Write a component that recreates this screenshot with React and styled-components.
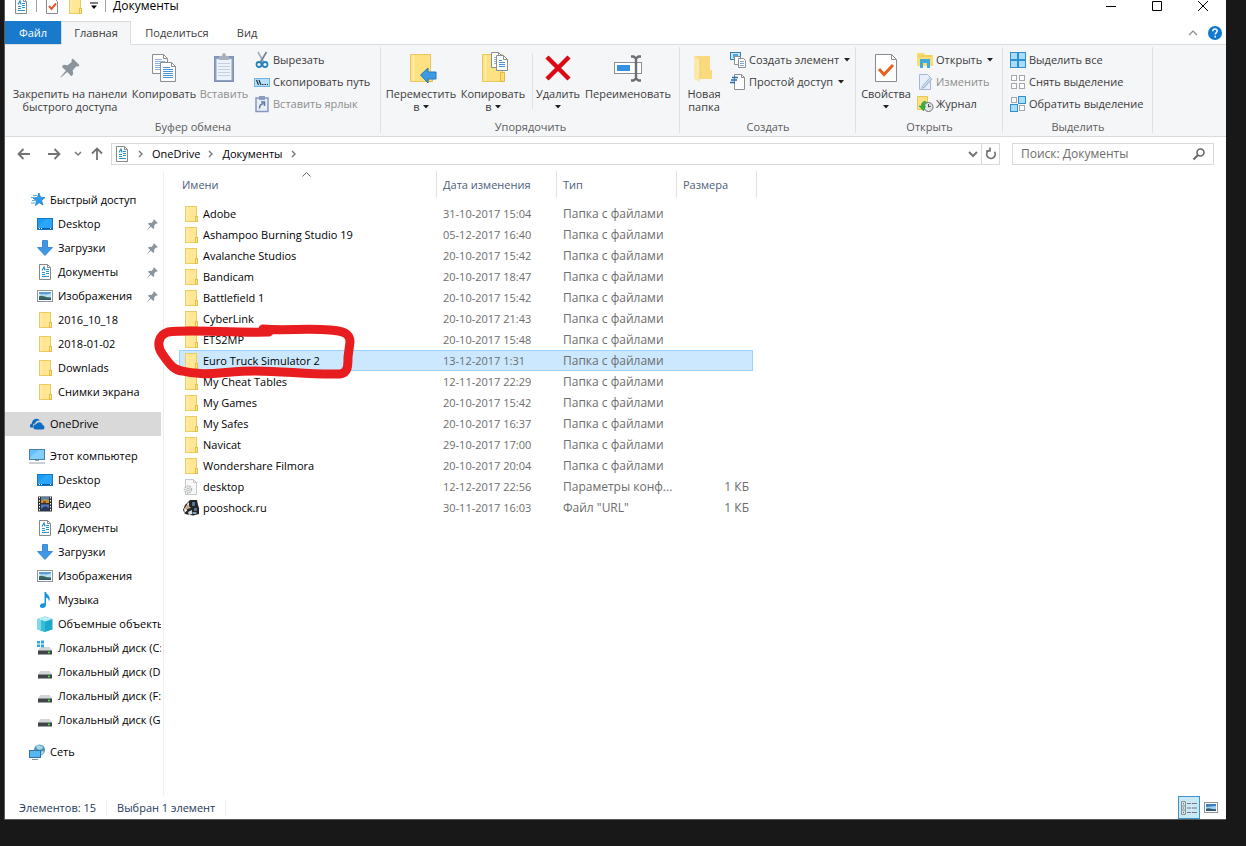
import React from "react";
import styled, { createGlobalStyle, css } from "styled-components";

const GlobalStyle = createGlobalStyle`
  *, *::before, *::after { box-sizing: border-box; }
  html, body { margin: 0; padding: 0; }
  body { background: #181818; font: 11px/16px "Open Sans", "Noto Sans", sans-serif; color: #000; }
  button, input { font: inherit; color: inherit; border: 0; background: none; padding: 0; margin: 0; }
  a { color: inherit; text-decoration: none; }
  svg { display: block; flex: none; overflow: visible; }
`;

/* ---------- window frame ---------- */
const Desktop = styled.div`
  min-height: 100vh;
  padding: 0 20px 26px 4px;
  display: flex;
  overflow: hidden;
`;
const Window = styled.main`
  flex: 1;
  min-width: 0;
  display: flex;
  flex-direction: column;
  background: #fff;
  border: solid #5a5a5a;
  border-width: 0 0 1px 1px;
`;
const TitleBar = styled.header`
  display: flex;
  align-items: center;
  justify-content: space-between;
  box-sizing: content-box;
  height: 12px;
  padding-bottom: 9px;
`;
const QuickAccess = styled.div`
  display: flex;
  align-items: center;
  gap: 7px;
  padding-left: 8px;
`;
const Divider = styled.span`
  width: 1px;
  height: ${(p) => p.$h}px;
  background: ${(p) => p.$color || "#a0a0a0"};
`;
const Title = styled.h1`
  margin: 0;
  font-size: 12px;
  line-height: 12px;
  font-weight: 400;
`;
const IconButton = styled.button`
  display: flex;
  align-items: center;
  justify-content: center;
  width: ${(p) => p.$w || 16}px;
`;
const Controls = styled.div`
  display: flex;
`;

/* ---------- tabs ---------- */
const TabStrip = styled.div`
  display: flex;
  height: 23px;
`;
const Tab = styled.button`
  width: ${(p) => p.$w}px;
  height: 24px;
  color: #3b3b3b;
  border: 1px solid transparent;
  ${(p) => p.$kind === "file" && css`background: #1979ca; color: #fff; height: 23px;`}
  ${(p) => p.$kind === "active" && css`background: #f5f6f7; border-color: #dadbdc; border-bottom-color: #f5f6f7; position: relative;`}
`;
const TabTools = styled.div`
  display: flex;
  align-items: center;
  gap: 6px;
  margin-left: auto;
  padding-right: 3px;
`;

/* ---------- ribbon ---------- */
const Ribbon = styled.div`
  display: flex;
  background: #f5f6f7;
  border: solid #dadbdc;
  border-width: 1px 0;
`;
const Group = styled.section`
  width: ${(p) => p.$w}px;
  position: relative;
  &::after {
    content: "";
    position: absolute;
    right: 0;
    top: 2px;
    bottom: 3px;
    width: 1px;
    background: #dfe1e3;
  }
`;
const GroupBody = styled.div`
  display: flex;
  height: 73px;
  padding-left: ${(p) => p.$pad}px;
`;
const GroupTitle = styled.h2`
  margin: 0;
  font-size: 11px;
  font-weight: 400;
  line-height: 18px;
  text-align: center;
  color: #5c5c5c;
`;
const BigButton = styled.button`
  width: ${(p) => p.$w}px;
  padding-top: 7px;
  display: flex;
  flex-direction: column;
  align-items: center;
  gap: 3px;
  white-space: nowrap;
  color: ${(p) => (p.disabled ? "#8d8d8d" : "#3b3b3b")};
`;
const BigLabel = styled.span`
  display: block;
  line-height: 13px;
  text-align: center;
`;
const ArrowLine = styled.span`
  display: flex;
  align-items: center;
  justify-content: center;
  gap: 3px;
  height: 13px;
`;
const SmallColumn = styled.div`
  display: flex;
  flex-direction: column;
  padding: 4px 0 0 ${(p) => p.$pad}px;
`;
const SmallButton = styled.button`
  display: flex;
  align-items: center;
  gap: 3px;
  height: 22px;
  white-space: nowrap;
  color: ${(p) => (p.disabled ? "#8d8d8d" : "#3b3b3b")};
  & > svg:last-child:not(:first-child) { margin-left: 2px; }
`;
const InnerDivider = styled.span`
  width: 1px;
  height: 56px;
  margin: 8px 0 0 3px;
  background: #dfe1e3;
`;

/* ---------- address row ---------- */
const AddressRow = styled.div`
  display: flex;
  align-items: center;
  height: 34px;
  padding: 0 12px 0 9px;
`;
const AddressBox = styled.nav`
  flex: 1;
  display: flex;
  align-items: center;
  gap: 8px;
  height: 22px;
  margin: 0 12px 0 0;
  padding-left: 2px;
  border: 1px solid #d9d9d9;
`;
const AddressEnd = styled.div`
  display: flex;
  align-items: center;
  margin-left: auto;
  height: 20px;
  & > button:last-child { height: 20px; border-left: 1px solid #d9d9d9; }
`;
const SearchBox = styled.label`
  display: flex;
  align-items: center;
  width: 202px;
  height: 22px;
  padding: 0 8px;
  border: 1px solid #d9d9d9;
`;
const SearchInput = styled.input`
  flex: 1;
  min-width: 0;
  outline: 0;
  font-size: 12px;
  &::placeholder { color: #6d6d6d; opacity: 1; }
`;

/* ---------- navigation tree ---------- */
const Body = styled.div`
  flex: 1;
  display: flex;
  min-height: 0;
`;
const Tree = styled.nav`
  width: 159px;
  flex: none;
  display: flex;
  flex-direction: column;
  gap: 8px;
  padding: 17px 2px 32px 0;
  border-right: 1px solid #f0f0f0;
`;
const TreeList = styled.ul`
  list-style: none;
  margin: 0;
  padding: 0;
`;
const TreeLink = styled.a`
  display: flex;
  align-items: center;
  gap: 5px;
  height: 24px;
  padding-left: ${(p) => (p.$root ? 24 : 32)}px;
  overflow: hidden;
  white-space: nowrap;
  background: ${(p) => (p.$active ? "#d9d9d9" : "transparent")};
`;
const PinSlot = styled.span`
  margin-left: auto;
  padding-right: 3px;
`;

/* ---------- file list ---------- */
const Files = styled.section`
  flex: 1;
  min-width: 0;
  position: relative;
  padding-left: 15px;
`;
const Table = styled.table`
  table-layout: fixed;
  width: 578px;
  border-spacing: 0;
`;
const Th = styled.th`
  position: relative;
  height: 27px;
  padding: 0 0 0 ${(p) => (p.$first ? 3 : 6)}px;
  border-right: 1px solid #e2e2e2;
  text-align: left;
  font-weight: 400;
  color: #4c607a;
`;
const SortMark = styled.span`
  position: absolute;
  top: 1px;
  left: 123px;
`;
const Spacer = styled.tr`
  height: 5px;
`;
const Row = styled.tr`
  & > td {
    height: 21px;
    padding: 0 4px 0 6px;
    line-height: 16px;
    color: #6d6d6d;
    white-space: nowrap;
    overflow: hidden;
    text-overflow: ellipsis;
  }
  & > td:first-child { color: #000; padding-left: 4px; }
  & > td:nth-child(n + 3) { font-size: 12px; }
  & > td:nth-child(4) { text-align: right; }
  ${(p) => p.$selected && css`
    & > td:nth-child(-n + 4) {
      background: #cce8ff;
      box-shadow: inset 0 1px #99d1ff, inset 0 -1px #99d1ff;
    }
    & > td:nth-child(1) { box-shadow: inset 0 1px #99d1ff, inset 0 -1px #99d1ff, inset 1px 0 #99d1ff; }
    & > td:nth-child(4) { box-shadow: inset 0 1px #99d1ff, inset 0 -1px #99d1ff, inset -1px 0 #99d1ff; }
  `}
`;
const Name = styled.span`
  display: flex;
  align-items: center;
  gap: 4px;
`;
const Marker = styled.svg`
  position: absolute;
  left: -12px;
  top: 150px;
  pointer-events: none;
`;

/* ---------- status bar ---------- */
const StatusBar = styled.footer`
  display: flex;
  align-items: center;
  gap: 10px;
  height: 23px;
  padding-left: 14px;
  color: #1e395b;
`;
const Views = styled.div`
  display: flex;
  margin-left: auto;
  padding-right: 4px;
`;
const ViewButton = styled.button`
  display: flex;
  align-items: center;
  justify-content: center;
  width: 22px;
  height: 23px;
  border: 1px solid ${(p) => (p.$on ? "#3a97c4" : "transparent")};
  background: ${(p) => (p.$on ? "#cbe8f6" : "none")};
`;

/* ---------- icons ---------- */
const Svg = ({ s = 16, h, children, ...rest }) => (
  <svg width={s} height={h || s} viewBox={`0 0 ${s} ${h || s}`} fill="none" aria-hidden="true" {...rest}>{children}</svg>
);
const Caret = () => <Svg s={6} h={4}><path d="M0 0h6L3 3.5z" fill="#222" /></Svg>;
const FolderIcon = () => (
  <Svg>
    <rect x="2.5" y="0.5" width="11" height="15" fill="#ffe794" stroke="#edcb62" />
    <path d="M4 1v14" stroke="#fff0b5" />
    <rect x="12.500" y="10.500" width="2" height="5" fill="#ffe596" stroke="#e6bd47" />
  </Svg>
);
const DocIcon = () => (
  <Svg>
    <path d="M2.500.5h8l3 3v12h-11z" fill="#fff" stroke="#858a8f" />
    <path d="M10.500.5v3h3" stroke="#858a8f" />
    <path d="M5 6.500 7 3l1 3.500M9 5.500h3M5 8.500h3M9 7.500h3M9 9.500h3M5 10.500h3M5 12.500h7" stroke="#2b93cf" strokeWidth="1.200" />
  </Svg>
);
const CheckDoc = () => (
  <Svg>
    <path d="M2.500.5h8l3 3v12h-11z" fill="#fff" stroke="#8a8a8a" />
    <path d="m5 8 2.500 3L12 5.500" stroke="#e2592b" strokeWidth="2" />
  </Svg>
);
const DesktopIcon = () => (
  <Svg>
    <rect x=".5" y="2.500" width="15" height="11" fill="#1a9bf5" stroke="#1479c4" />
    <path d="m1 10 8-7h6v10H1z" fill="#39b0ff" opacity=".5" />
    <path d="M1 12.500h14" stroke="#0f5fa5" /><path d="M2 12.500h1m1 0h1m8 0h1" stroke="#fff" />
  </Svg>
);
const DownIcon = () => <Svg><path d="M5.500.5h5v7h5L8 15.500.5 7.500h5z" fill="#3f97e4" stroke="#2d7ccb" strokeWidth=".8" /></Svg>;
const PictureIcon = () => (
  <Svg>
    <rect x=".5" y="2.500" width="15" height="11" fill="#fff" stroke="#8f9499" />
    <rect x="2" y="4" width="12" height="8" fill="#b9def5" />
    <path d="M2 4h12v1.500L9 6.500 2 6z" fill="#5a9bd3" />
    <path d="M2 8.500c3-2 5 1 12 1v2.500H2z" fill="#38665c" /><path d="M6 11h8v1H2z" fill="#274b7b" />
  </Svg>
);
const StarIcon = () => (
  <Svg>
    <path d="m10 1 1.600 4.300 4.400.2-3.400 2.900L14 13l-3.800-2.300L6.500 13.500l.9-4.600L4 6l4.400-.6z" fill="#2f9be8" stroke="#1779c6" strokeWidth=".7" />
    <path d="M4 3.500h4M2 5.500h3M3 8.500h3M2 11h4" stroke="#4aaef0" />
  </Svg>
);
const PinIcon = ({ size = 11 }) => (
  <svg width={size} height={size} viewBox="0 0 22 22" aria-hidden="true">
    <path d="M14 .5 21.500 8l-2 1.500-1.500-.5-4 4.500.5 4.500-2 2-4.500-4.500L1 21.500.5 21 6.500 14 2 9.500l2-2 4.500.5L13 4l-.5-1.500z" fill="#8b949b" />
  </svg>
);
const CloudIcon = () => (
  <Svg>
    <path d="M1.200 11.500A3 3 0 0 1 3 7.200 4.500 4.500 0 0 1 11 4.500C8 4 6.500 6 6.300 7.300 4.500 7.500 3.700 9 4.200 11.500z" fill="#0d6cbd" />
    <path d="M6.800 13.500a2.600 2.600 0 0 1 .2-5.200 3.600 3.600 0 0 1 6.700.8A2.300 2.300 0 0 1 14 13.500z" fill="#0d6cbd" />
  </Svg>
);
const ComputerIcon = () => (
  <Svg>
    <rect x=".5" y="1.500" width="15" height="10" fill="#64c0fa" stroke="#4a7fa6" />
    <path d="M1 9 10 2h5v9H1z" fill="#9bdaff" opacity=".55" />
    <path d="M6 12.500h4M0 15h16" stroke="#8ca2b3" />
  </Svg>
);
const VideoIcon = () => (
  <Svg>
    <path d="M1 .5h14v15H1z" fill="#303030" />
    <path d="M2.500 1v14M13.500 1v14" stroke="#fff" strokeDasharray="1.500 1.500" />
    <path d="M4 1h8v6H4z" fill="#5c7fb8" /><path d="M4 4.500 8 3l4 1v3H4z" fill="#b6992f" /><path d="M6 5h3v2H6z" fill="#b8402a" />
    <path d="M4 8.500h8V15H4z" fill="#4e79c4" /><path d="M4 13 8 10l4 2v3H4z" fill="#26365c" />
  </Svg>
);
const MusicIcon = () => (
  <Svg>
    <path d="M7.500 0h1.500c.5 3 5.500 4 3 9.500 0-2.500-1.500-3.500-3-4v7.500c0 1.700-1.500 3-3.500 3S2.500 15 3 13.300c.5-1.800 2.600-2.500 4.500-2z" fill="#1a93df" />
  </Svg>
);
const CubeIcon = () => (
  <Svg>
    <path d="M8 .5 15.500 3v10.500L8 16 .5 13.500V3z" fill="#1fa9c9" />
    <path d="M.5 3 8 5.500V16L.5 13.500z" fill="#7cdcec" /><path d="M8 .5 15.500 3 8 5.500.5 3z" fill="#b6f0f6" /><path d="m4 4 4 1.500V16l-4-1.500z" fill="#37bdd6" />
  </Svg>
);
const DiskIcon = ({ win }) => (
  <Svg>
    <path d="M3.500 7h9L15 10.500H1z" fill="#d3d5d6" /><path d="M1 10.500h14v4H1z" fill="#3e4347" />
    <path d="M1 10.500h14" stroke="#8b9094" /><path d="M11 12.500h2" stroke="#4fe05a" strokeWidth="1.500" />
    {win && <><path d="M0 0h7v7.500H0z" fill="#fff" /><path d="M0 1h3v2.500H0zM4 .5h3v3H4zM0 4.500h3V7H0zM4 4.500h3v3H4z" fill="#2aa8e0" /></>}
  </Svg>
);
const NetworkIcon = () => (
  <Svg>
    <circle cx="10.500" cy="6" r="5.500" fill="#4f94bd" /><path d="M7 2c3-2 7 0 7 2l-3 2-3-1zM10 8l4-1 1 1-2 3z" fill="#a8d5e5" />
    <rect x=".5" y="6.500" width="11" height="7" fill="#57b6f4" stroke="#31729e" /><path d="M3 15.500h6" stroke="#7a95a8" />
  </Svg>
);
const IniIcon = () => (
  <Svg>
    <path d="M2.500.5h8l3 3v12h-11z" fill="#f8f8f8" stroke="#c5c8ca" /><path d="M10.500.5v3h3" stroke="#c5c8ca" />
    <circle cx="5" cy="10.500" r="3.500" fill="#eee" stroke="#b2b6b9" strokeWidth="1.500" strokeDasharray="1.500 1" /><circle cx="5" cy="10.500" r="1.300" fill="#fff" stroke="#b2b6b9" />
  </Svg>
);
const UrlIcon = () => (
  <Svg>
    <path d="M7 0h7l1 5 1 3v6l-6 1.500-8-1.500-2-4 2-5z" fill="#202428" />
    <path d="M1 9 5 3l1 3 2 2-4 1-2 3z" fill="#c9b08b" /><path d="M1.500 8.500l3 1.500-3 3z" fill="#fff" /><path d="M4 4l2-2v4z" fill="#eee3cf" />
    <path d="M9 2h3v4H9zM11 8h3v3h-3z" fill="#56708f" /><path d="m5 12 4-2v4l-3 1z" fill="#d6dade" /><path d="M9.500 12h4v2h-4z" fill="#8aa0b8" />
  </Svg>
);
const Page = ({ x, y, w, h, gray }) => (
  <g transform={`translate(${x} ${y})`}>
    <path d={`M.5.5h${w - 5}l4 4v${h - 5}h-${w - 1}z`} fill="#fff" stroke="#8a8f94" />
    <path d={`M${w - 4.5}.5v4h4`} stroke="#8a8f94" />
    {Array.from({ length: Math.floor((h - 7) / 2) }, (_, i) => (
      <path key={i} d={`M3 ${5.5 + i * 2}h${i ? w - 6 : w - 9}`} stroke={gray ? "#8eb3da" : "#4a90d9"} />
    ))}
  </g>
);
const CopyIcon = () => <Svg s={32}><Page x={4} y={2} w={16} h={20} gray /><Page x={12} y={10} w={16} h={20} /></Svg>;
const BigPin = () => <Svg s={32}><g transform="translate(6 6)"><PinIcon size={20} /></g></Svg>;
const PasteIcon = () => (
  <Svg s={32}>
    <rect x="6.500" y="4.500" width="19" height="25" fill="#8d9fc2" stroke="#7d8fb3" /><path d="M8.500 7h15v21h-15z" fill="#eef2f9" />
    <path d="M10 11.500h12M10 14.500h12M10 17.500h12M10 20.500h12M10 23.500h12" stroke="#c5cfe2" />
    <path d="M11 4h3c0-4 4-4 4 0h3v4H11z" fill="#a9b1c0" />
  </Svg>
);
const CutIcon = () => (
  <Svg>
    <path d="M4 0l5.500 10" stroke="#a4afb9" strokeWidth="1.600" /><path d="M12.500 0 6.500 10" stroke="#71808e" strokeWidth="1.600" />
    <circle cx="5" cy="12.500" r="2.500" stroke="#2683c2" strokeWidth="1.800" /><circle cx="11" cy="12.500" r="2.500" stroke="#2683c2" strokeWidth="1.800" />
  </Svg>
);
const PathIcon = () => (
  <Svg><rect x=".5" y="4.500" width="15" height="8" fill="#b8e0fa" stroke="#6fb2df" /><path d="m2.500 6 2 5M5 6l2 5M8 10.500h1.500m1 0H12m1 0h1" stroke="#234" strokeWidth="1.200" /></Svg>
);
const PasteLinkIcon = () => (
  <Svg>
    <rect x="2" y="2" width="12" height="13.500" fill="#e9eef7" stroke="#8498bf" strokeWidth="1.500" /><path d="M5 0h6v4H5z" fill="#8b9cbd" />
    <path d="M5.500 12.500c0-3 1-4.500 4-5M7 6h3.500v4" stroke="#5e78ab" strokeWidth="1.500" />
  </Svg>
);
const BigFolder = ({ children }) => (
  <Svg s={32}>
    <rect x="5.500" y="2.500" width="20" height="27" fill="#fde283" stroke="#e9c659" /><path d="M8.500 3v26" stroke="#fff0b0" strokeWidth="1.500" /><path d="M23.500 20.500h4v9h-4z" fill="#fbdc78" stroke="#e3b840" />
    {children}
  </Svg>
);
const MoveIcon = () => <BigFolder><path d="M15.500 23 23 16v4h8v7h-8v4z" fill="#3d9be5" stroke="#2778bd" /></BigFolder>;
const CopyToIcon = () => <BigFolder><Page x={14} y={0} w={12} h={16} gray /><Page x={19} y={3} w={12} h={16} /></BigFolder>;
const DeleteIcon = () => <Svg s={32}><path d="m5 5 22 22M27 5 5 27" stroke="#dc0a14" strokeWidth="4.500" /></Svg>;
const RenameIcon = () => (
  <Svg s={32}>
    <rect x="2.500" y="10.500" width="27" height="11" fill="#fff" stroke="#8a8f94" /><path d="M5 13h13v6H5z" fill="#3390e0" />
    <path d="M19 4.500h2.500l2.500 2 2.500-2H29M24 6v20M19 28.500h2.500l2.500-2 2.500 2H29" stroke="#6b6f73" strokeWidth="2.400" />
  </Svg>
);
const NewFolderIcon = () => (
  <Svg s={32}><path d="M6 4h16v14h2v9H11z" fill="#f9da7e" /><path d="M6 4l6 4v22l-6-3z" fill="#fbe9aa" /><path d="M12 8v19" stroke="#f0cd66" /></Svg>
);
const NewItemIcon = () => (
  <Svg>
    <rect x=".5" y=".5" width="10" height="7" fill="#cbe7fa" stroke="#2f80bd" /><path d="M3 2h5v4H3z" fill="#4fa7e0" />
    <path d="M4.500 4.500h6v8h-6z" fill="#fff" stroke="#8a8f94" /><path d="M8.500 6.500h5l2 2v7h-7z" fill="#fff" stroke="#8a8f94" />
    <path d="M10 9.500h4M10 11.500h4M10 13.500h4" stroke="#7da7cf" />
  </Svg>
);
const EasyIcon = () => (
  <Svg><path d="M4.500.5h7l3 3v12h-10z" fill="#fff" stroke="#8a8f94" /><path d="M11.500.5v3h3" stroke="#8a8f94" /><path d="M2 3.500h6M1 6h6M0 8.500h5" stroke="#1f6fb2" strokeWidth="1.400" /></Svg>
);
const PropsIcon = () => (
  <Svg s={32}><path d="M5.500 2.500h16l5 5v22h-21z" fill="#fff" stroke="#8a8a8a" /><path d="M21.500 2.500v5h5" stroke="#8a8a8a" /><path d="m9 17 5 5.500 9-9.500" stroke="#e8601f" strokeWidth="3" /></Svg>
);
const OpenIcon = () => (
  <Svg><path d="M0 1h7l1 2h8v11H0z" fill="#fbdd75" /><path d="M1 4h14" stroke="#e8c14f" /><path d="M3 16V7h10v9h-3v-5H6v5z" fill="#3fabdd" /></Svg>
);
const EditIcon = () => (
  <Svg><path d="M2.500.5h8l3 3v12h-11z" fill="#e6effa" stroke="#a3b7d4" /><path d="m5 12 8-9 2.500 2-8 9L4 15z" fill="#a9bedd" /><path d="m6 13 8-9" stroke="#dce7f5" /></Svg>
);
const HistoryIcon = () => (
  <Svg>
    <path d="M.5.5h10v13H.5z" fill="#fde283" stroke="#e9c659" /><circle cx="11.500" cy="11" r="4.500" fill="#e3e5e7" stroke="#6c7278" /><path d="M11.500 8v3l2.500-1" stroke="#555" />
    <path d="M8 5C5 6 4 8 4.500 10H2l4.500 5 2-5H7c0-2 .5-3 2.500-3.500z" fill="#3ab53c" stroke="#218c2c" strokeWidth=".5" />
  </Svg>
);
const SelectGrid = ({ on }) => (
  <Svg>
    {[[1, 1], [9, 1], [1, 9], [9, 9]].map(([x, y], i) => on[i]
      ? <rect key={i} x={x - 0.5} y={y - 0.5} width="7" height="7" fill="#a9dcf9" stroke="#2f8fd0" />
      : <rect key={i} x={x + 0.5} y={y + 0.5} width="5" height="5" fill="#fff" stroke="#a5a8aa" />)}
  </Svg>
);
const Crumb = () => <Svg s={6} h={8}><path d="m1 1 3 3-3 3" stroke="#777" strokeWidth="1.400" /></Svg>;
const ChevronDown = () => <Svg s={10} h={8}><path d="m1 2 4 4 4-4" stroke="#777" strokeWidth="2" /></Svg>;
const Arrow = ({ turn = 0 }) => (
  <Svg s={14}><g transform={`rotate(${turn} 7 7)`}><path d="M13 7H2M6.500 2 1.500 7l5 5" stroke="#737373" strokeWidth="1.800" /></g></Svg>
);

/* ---------- data ---------- */
const quick = [
  ["Desktop", DesktopIcon, true], ["Загрузки", DownIcon, true], ["Документы", DocIcon, true], ["Изображения", PictureIcon, true],
  ["2016_10_18", FolderIcon], ["2018-01-02", FolderIcon], ["Downlads", FolderIcon], ["Снимки экрана", FolderIcon],
];
const WinDisk = () => <DiskIcon win />;
const computer = [
  ["Desktop", DesktopIcon], ["Видео", VideoIcon], ["Документы", DocIcon], ["Загрузки", DownIcon], ["Изображения", PictureIcon],
  ["Музыка", MusicIcon], ["Объемные объекты", CubeIcon], ["Локальный диск (C:)", WinDisk], ["Локальный диск (D:)", DiskIcon],
  ["Локальный диск (F:)", DiskIcon], ["Локальный диск (G:)", DiskIcon],
];
const folder = (name, date) => ({ name, date, type: "Папка с файлами", size: "", Icon: FolderIcon });
const files = [
  folder("Adobe", "31-10-2017 15:04"), folder("Ashampoo Burning Studio 19", "05-12-2017 16:40"),
  folder("Avalanche Studios", "20-10-2017 15:42"), folder("Bandicam", "20-10-2017 18:47"),
  folder("Battlefield 1", "20-10-2017 15:42"), folder("CyberLink", "20-10-2017 21:43"),
  folder("ETS2MP", "20-10-2017 15:48"), { ...folder("Euro Truck Simulator 2", "13-12-2017 1:31"), selected: true },
  folder("My Cheat Tables", "12-11-2017 22:29"), folder("My Games", "20-10-2017 15:42"),
  folder("My Safes", "20-10-2017 16:37"), folder("Navicat", "29-10-2017 17:00"),
  folder("Wondershare Filmora", "20-10-2017 20:04"),
  { name: "desktop", date: "12-12-2017 22:56", type: "Параметры конф...", size: "1 КБ", Icon: IniIcon },
  { name: "pooshock.ru", date: "30-11-2017 16:03", type: "Файл \"URL\"", size: "1 КБ", Icon: UrlIcon },
];

/* ---------- composed parts ---------- */
const Big = ({ w, icon, l1, l2, arrow, disabled }) => (
  <BigButton $w={w} disabled={disabled}>
    {icon}
    <BigLabel>{l1}{(l2 || arrow) && <ArrowLine>{l2}{arrow && <Caret />}</ArrowLine>}</BigLabel>
  </BigButton>
);
const Small = ({ icon, children, arrow, disabled }) => (
  <SmallButton disabled={disabled}>{icon}<span>{children}</span>{arrow && <Caret />}</SmallButton>
);
const TreeItem = ({ label, Icon, root, pin, active }) => (
  <li>
    <TreeLink href="#" $root={root} $active={active} aria-current={active ? "true" : undefined}>
      <Icon />{label}{pin && <PinSlot><PinIcon /></PinSlot>}
    </TreeLink>
  </li>
);

export default function App() {
  return (
    <Desktop>
      <GlobalStyle />
      <Window>
        <TitleBar>
          <QuickAccess>
            <DocIcon />
            <Divider $h={12} />
            <IconButton aria-label="Свойства"><CheckDoc /></IconButton>
            <IconButton aria-label="Новая папка"><FolderIcon /></IconButton>
            <IconButton aria-label="Настройка панели" $w={8}><Svg s={8} h={8}><path d="M0 1h8" stroke="#000" /><path d="M1 3.500h6L4 7z" fill="#000" /></Svg></IconButton>
            <Divider $h={12} />
            <Title>Документы</Title>
          </QuickAccess>
          <Controls>
            <IconButton $w={46} aria-label="Свернуть"><Svg s={10}><path d="M0 5.500h10" stroke="#000" /></Svg></IconButton>
            <IconButton $w={46} aria-label="Развернуть"><Svg s={10}><path d="M.5.5h9v9h-9z" stroke="#000" /></Svg></IconButton>
            <IconButton $w={46} aria-label="Закрыть"><Svg s={10}><path d="m0 0 10 10M10 0 0 10" stroke="#000" /></Svg></IconButton>
          </Controls>
        </TitleBar>

        <TabStrip>
          <Tab $w={56} $kind="file">Файл</Tab>
          <Tab $w={70} $kind="active">Главная</Tab>
          <Tab $w={92}>Поделиться</Tab>
          <Tab $w={48}>Вид</Tab>
          <TabTools>
            <IconButton aria-label="Свернуть ленту"><Svg s={10} h={8}><path d="m1 6 4-4 4 4" stroke="#8a8a8a" strokeWidth="1.200" /></Svg></IconButton>
            <IconButton aria-label="Справка"><Svg><circle cx="8" cy="8" r="7" fill="#1079d0" /><path d="M5.800 6.200C5.800 3.200 10.300 3.400 10.200 6c0 1.600-2 1.600-2 3.600M8.200 10.800v1.600" stroke="#fff" strokeWidth="1.500" /></Svg></IconButton>
          </TabTools>
        </TabStrip>

        <Ribbon>
          <Group $w={376}>
            <GroupBody $pad={3}>
              <Big w={124} icon={<BigPin />} l1="Закрепить на панели" l2="быстрого доступа" />
              <Big w={64} icon={<CopyIcon />} l1="Копировать" />
              <Big w={56} icon={<PasteIcon />} l1="Вставить" disabled />
              <SmallColumn $pad={2}>
                <Small icon={<CutIcon />}>Вырезать</Small>
                <Small icon={<PathIcon />}>Скопировать путь</Small>
                <Small icon={<PasteLinkIcon />} disabled>Вставить ярлык</Small>
              </SmallColumn>
            </GroupBody>
            <GroupTitle>Буфер обмена</GroupTitle>
          </Group>
          <Group $w={299}>
            <GroupBody $pad={4}>
              <Big w={72} icon={<MoveIcon />} l1="Переместить" l2="в" arrow />
              <Big w={72} icon={<CopyToIcon />} l1="Копировать" l2="в" arrow />
              <InnerDivider />
              <Big w={50} icon={<DeleteIcon />} l1="Удалить" arrow />
              <Big w={90} icon={<RenameIcon />} l1="Переименовать" />
            </GroupBody>
            <GroupTitle>Упорядочить</GroupTitle>
          </Group>
          <Group $w={176}>
            <GroupBody $pad={4}>
              <Big w={40} icon={<NewFolderIcon />} l1="Новая" l2="папка" />
              <SmallColumn $pad={6}>
                <Small icon={<NewItemIcon />} arrow>Создать элемент</Small>
                <Small icon={<EasyIcon />} arrow>Простой доступ</Small>
              </SmallColumn>
            </GroupBody>
            <GroupTitle>Создать</GroupTitle>
          </Group>
          <Group $w={147}>
            <GroupBody $pad={4}>
              <Big w={52} icon={<PropsIcon />} l1="Свойства" arrow />
              <SmallColumn $pad={5}>
                <Small icon={<OpenIcon />} arrow>Открыть</Small>
                <Small icon={<EditIcon />} disabled>Изменить</Small>
                <Small icon={<HistoryIcon />}>Журнал</Small>
              </SmallColumn>
            </GroupBody>
            <GroupTitle>Открыть</GroupTitle>
          </Group>
          <Group $w={150}>
            <GroupBody $pad={0}>
              <SmallColumn $pad={7}>
                <Small icon={<SelectGrid on={[1, 1, 1, 1]} />}>Выделить все</Small>
                <Small icon={<SelectGrid on={[0, 0, 0, 0]} />}>Снять выделение</Small>
                <Small icon={<SelectGrid on={[0, 1, 1, 0]} />}>Обратить выделение</Small>
              </SmallColumn>
            </GroupBody>
            <GroupTitle>Выделить</GroupTitle>
          </Group>
        </Ribbon>

        <AddressRow>
          <IconButton $w={20} aria-label="Назад"><Arrow /></IconButton>
          <IconButton $w={40} aria-label="Вперед"><Arrow turn={180} /></IconButton>
          <IconButton $w={8} aria-label="Последние расположения"><Svg s={6} h={4}><path d="m0 0 3 3 3-3" stroke="#777" strokeWidth="1.500" /></Svg></IconButton>
          <IconButton $w={29} aria-label="Вверх"><Arrow turn={90} /></IconButton>
          <AddressBox aria-label="Адрес">
            <DocIcon />
            <Crumb />
            <a href="#">OneDrive</a>
            <Crumb />
            <a href="#">Документы</a>
            <Crumb />
            <AddressEnd>
              <IconButton aria-label="Предыдущие расположения"><ChevronDown /></IconButton>
              <IconButton $w={18} aria-label="Обновить"><Svg s={12}><path d="M8 2.300A4.300 4.300 0 1 1 2.500 3.700M7 -.5V3h4" stroke="#707070" strokeWidth="1.600" transform="translate(12 0) scale(-1 1)" /></Svg></IconButton>
            </AddressEnd>
          </AddressBox>
          <SearchBox>
            <SearchInput type="text" placeholder="Поиск: Документы" aria-label="Поиск: Документы" />
            <Svg s={12}><circle cx="7.500" cy="4.500" r="3.500" stroke="#666" strokeWidth="1.600" /><path d="m5 7-4.500 4.500" stroke="#666" strokeWidth="2" /></Svg>
          </SearchBox>
        </AddressRow>

        <Body>
          <Tree aria-label="Область навигации">
            <TreeList>
              <TreeItem root label="Быстрый доступ" Icon={StarIcon} />
              {quick.map(([label, Icon, pin]) => <TreeItem key={label} label={label} Icon={Icon} pin={pin} />)}
            </TreeList>
            <TreeList><TreeItem root active label="OneDrive" Icon={CloudIcon} /></TreeList>
            <TreeList>
              <TreeItem root label="Этот компьютер" Icon={ComputerIcon} />
              {computer.map(([label, Icon]) => <TreeItem key={label} label={label} Icon={Icon} />)}
            </TreeList>
            <TreeList><TreeItem root label="Сеть" Icon={NetworkIcon} /></TreeList>
          </Tree>

          <Files>
            <Table>
              <colgroup><col width="258" /><col width="120" /><col width="120" /><col width="76" /><col width="4" /></colgroup>
              <thead>
                <tr>
                  <Th $first>Имени<SortMark><Svg s={9} h={5}><path d="m.5 4.500 4-4 4 4" stroke="#666" /></Svg></SortMark></Th>
                  <Th>Дата изменения</Th>
                  <Th>Тип</Th>
                  <Th colSpan={2}>Размера</Th>
                </tr>
              </thead>
              <tbody>
                <Spacer aria-hidden="true" />
                {files.map(({ name, date, type, size, Icon, selected }) => (
                  <Row key={name} $selected={selected}>
                    <td><Name><Icon />{name}</Name></td>
                    <td>{date}</td>
                    <td>{type}</td>
                    <td>{size}</td>
                  </Row>
                ))}
              </tbody>
            </Table>
            <Marker width="208" height="64" viewBox="152 321 208 64" fill="none" aria-hidden="true">
              <path d="M269 332C230 333 190 329 168 332C158 335 156 346 163 355C169 363 173 370 182 371C205 377 225 371 255 371C285 371 310 375 340 374C348 373 348 366 348 357L350 342C350 333 343 331 330 330C305 328 285 331 263 329" stroke="#e81d20" strokeWidth="9" strokeLinecap="round" strokeLinejoin="round" />
            </Marker>
          </Files>
        </Body>

        <StatusBar>
          <span>Элементов: 15</span>
          <Divider $h={16} $color="#f0f0f0" />
          <span>Выбран 1 элемент</span>
          <Divider $h={16} $color="#f0f0f0" />
          <Views>
            <ViewButton $on aria-label="Таблица">
              <Svg><path d="M.5 1.500h4v13h-4zM0 6h5M0 10h5" stroke="#8a8f94" /><path d="M2 3.800h1m-1 4.200h1m-1 4.300h1" stroke="#a33" /><path d="M6 3.500h4m1 0h5M6 8h4m1 0h5M6 12.500h4m1 0h5" stroke="#777" /></Svg>
            </ViewButton>
            <ViewButton aria-label="Крупные значки"><Svg s={14}><rect x=".5" y="1.500" width="13" height="10" fill="#fff" stroke="#8f9499" /><path d="M2 3h10v7H2z" fill="#9fd0f2" /><path d="M2 3h10v2L2 6z" fill="#3e7fc0" /><path d="M2 8c3-2 6 1 10 0v2H2z" fill="#2f5b6e" /></Svg></ViewButton>
          </Views>
        </StatusBar>
      </Window>
    </Desktop>
  );
}
